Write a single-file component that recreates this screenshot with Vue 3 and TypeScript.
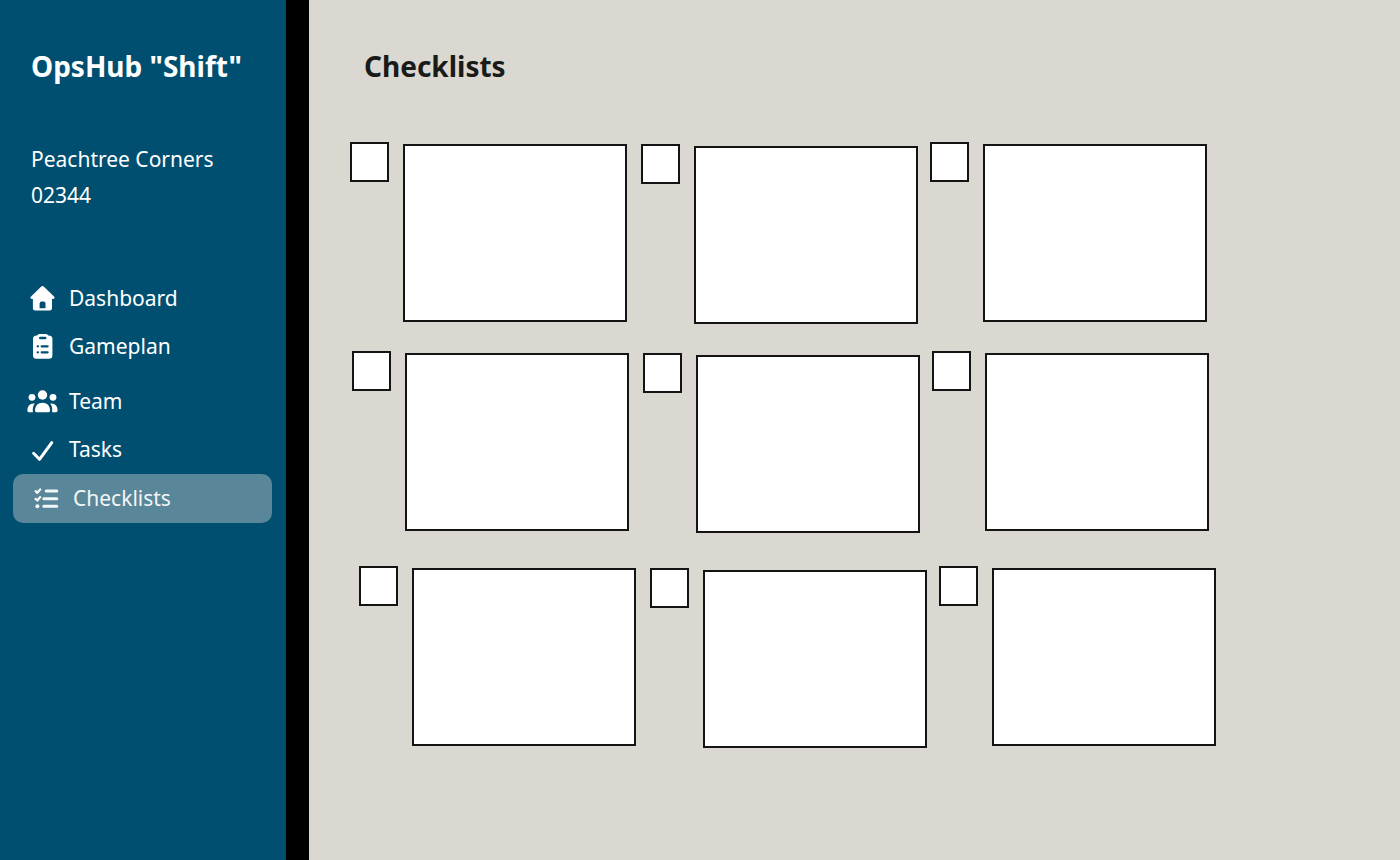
<script setup lang="ts">
type IconName = 'home' | 'clipboard' | 'team' | 'check' | 'list'

interface NavItem {
  label: string
  icon: IconName
  active?: boolean
}

const pages: NavItem[][] = [
  [
    { label: 'Dashboard', icon: 'home' },
    { label: 'Gameplan', icon: 'clipboard' },
  ],
  [
    { label: 'Team', icon: 'team' },
    { label: 'Tasks', icon: 'check' },
    { label: 'Checklists', icon: 'list', active: true },
  ],
]

const rows: number[][] = [
  [1, 2, 3],
  [4, 5, 6],
  [7, 8, 9],
]
</script>

<template>
  <div class="app">
    <aside class="sidebar">
      <h2 class="brand">OpsHub "Shift"</h2>
      <address class="store">
        <span>Peachtree Corners</span>
        <span>02344</span>
      </address>
      <nav class="nav">
        <div v-for="(group, g) in pages" :key="g" class="group">
          <a
            v-for="item in group"
            :key="item.label"
            href="#"
            class="link"
            :class="{ active: item.active }"
            :aria-current="item.active ? 'page' : undefined"
          >
            <svg class="icon" viewBox="0 0 32 32" aria-hidden="true">
              <path
                v-if="item.icon === 'home'"
                fill="currentColor"
                fill-rule="evenodd"
                d="M14.3 3.6a1.7 1.700 0 0 1 2.400 0L27 13.600c1.200 1.200.6 2.300-.8 2.300H25V25a2.500 2.500 0 0 1-2.500 2.500H8.400A2.500 2.500 0 0 1 5.900 25v-9.100H4.800c-1.400 0-2-1.100-.8-2.300zM12.600 25.200h5.900v-4.600a2 2 0 0 0-2-2h-1.900a2 2 0 0 0-2 2z"
              />
              <g v-else-if="item.icon === 'clipboard'">
                <path
                  fill="currentColor"
                  fill-rule="evenodd"
                  d="M10.300 4.400C10.900 3.300 11.700 2.900 12.800 2.900h5.800c1.100 0 1.900.4 2.500 1.500h.8a3.500 3.500 0 0 1 3.500 3.500v16.300a3.500 3.500 0 0 1-3.500 3.500H9.500a3.500 3.500 0 0 1-3.500-3.500V7.900a3.500 3.500 0 0 1 3.500-3.500zM13.300 5.700a1.300 1.300 0 0 0 0 2.600h4.900a1.300 1.300 0 0 0 0-2.600z"
                />
                <g class="cut">
                  <path d="M14.700 15.300h5.900M14.700 21.300h5.900" />
                  <path d="M10.700 15.300h.2M10.700 21.300h.2" />
                </g>
              </g>
              <g v-else-if="item.icon === 'team'" fill="currentColor">
                <circle cx="15.500" cy="9" r="4.700" />
                <circle cx="5" cy="11.300" r="3.400" />
                <circle cx="26" cy="11.300" r="3.400" />
                <path d="M8 24.500c0-4.700 3-7.700 7.500-7.700s7.500 3 7.500 7.700c0 1.200-.5 1.700-1.500 1.700h-12c-1 0-1.500-.5-1.500-1.700z" />
                <path d="M7.800 17.600C6 19.500 5.500 22.500 5.900 26.200H2C1 26.200.4 25.600.4 24.600.4 20.200 3 16.900 7.800 17.600z" />
                <path d="M23.200 17.600c1.800 1.900 2.300 4.900 1.900 8.600H29c1 0 1.600-.6 1.600-1.600 0-4.400-2.600-7.700-7.400-7z" />
              </g>
              <path
                v-else-if="item.icon === 'check'"
                class="tick"
                d="M6.600 19.300l5.900 6L24.800 8.600"
              />
              <g v-else class="lines">
                <path class="thick" d="M15.200 8h10.600M12.800 15.700h13M12.800 23.300h13" />
                <path class="fine" d="M4.600 8.200l1.700 1.600 2.900-3.400M4.600 15.900l1.700 1.600 2.900-3.400" />
                <circle cx="6.400" cy="23.300" r="2" fill="currentColor" />
              </g>
            </svg>
            <span class="label">{{ item.label }}</span>
          </a>
        </div>
      </nav>
    </aside>

    <main class="main">
      <h1 class="title">Checklists</h1>
      <section class="board" aria-label="Checklists">
        <div v-for="(row, r) in rows" :key="r" class="row">
          <div v-for="n in row" :key="n" class="cell">
            <input type="checkbox" class="box" :aria-labelledby="`card-${n}`" />
            <article :id="`card-${n}`" class="card" :aria-label="`Checklist ${n}`"></article>
          </div>
        </div>
      </section>
    </main>
  </div>
</template>

<style>
body {
  margin: 0;
}
</style>

<style scoped>
.app {
  display: flex;
  min-height: 100vh;
  font-family: 'Noto Sans', sans-serif;
  background: #dad8d1;
}

.sidebar {
  box-sizing: border-box;
  flex: 0 0 309px;
  padding-top: 46px;
  color: #fff;
  background: #004f71;
  border-right: 23px solid #000;
}

.brand,
.title {
  margin: 0;
  font-size: 28px;
  line-height: 40px;
  font-weight: 700;
}

.brand {
  padding-left: 31px;
}

.store {
  display: flex;
  flex-direction: column;
  margin-top: 55px;
  padding-left: 31px;
  font-size: 21px;
  line-height: 36px;
  font-style: normal;
}

.nav {
  display: flex;
  flex-direction: column;
  gap: 7px;
  margin-top: 62px;
  padding: 0 14px 0 13px;
}

.link {
  display: flex;
  align-items: center;
  gap: 10px;
  height: 48px;
  padding-left: 14px;
  font-size: 21px;
  color: #fff;
  text-decoration: none;
}

.link.active {
  height: 49px;
  padding-left: 18px;
  color: #f3f6f7;
  background: #598698;
  border-radius: 10px;
}

.icon {
  flex: none;
  width: 32px;
  height: 32px;
}

.label {
  padding-bottom: 2px;
}

.cut {
  fill: none;
  stroke: #004f71;
  stroke-width: 2.3;
  stroke-linecap: round;
}

.tick,
.lines .thick,
.lines .fine {
  fill: none;
  stroke: currentColor;
  stroke-width: 3;
  stroke-linecap: round;
  stroke-linejoin: round;
}

.lines .fine {
  stroke-width: 2.3;
}

.main {
  flex: 1;
  min-width: 0;
  padding-top: 46px;
}

.title {
  padding-left: 55px;
  color: #1a1a18;
}

.board {
  margin-top: 56px;
}

.row {
  display: flex;
  margin: 0 193px 27px 41px;
}

.row:nth-child(2) {
  margin: 0 191px 33px 43px;
}

.row:nth-child(3) {
  margin: 0 184px 33px 50px;
}

.cell {
  display: flex;
  flex: 1;
  align-items: flex-start;
  gap: 14px;
}

.cell:nth-child(2) {
  margin: 2px 12px 0 14px;
}

.box {
  appearance: none;
  box-sizing: border-box;
  flex: none;
  width: 39px;
  height: 40px;
  margin: 0;
  background: #fff;
  border: 2px solid #141414;
}

.box:checked {
  background: #004f71;
}

.card {
  box-sizing: border-box;
  flex: 1;
  height: 178px;
  margin-top: 2px;
  background: #fff;
  border: 2px solid #141414;
}
</style>
